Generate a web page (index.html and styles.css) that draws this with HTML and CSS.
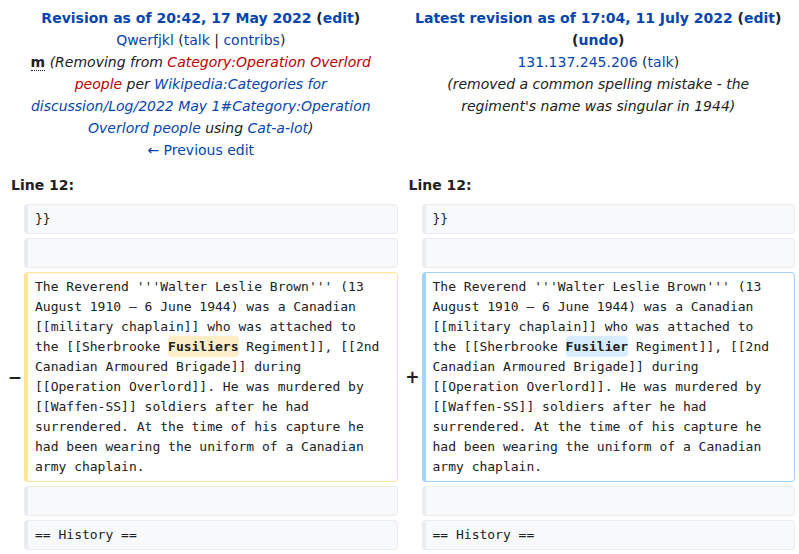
FILE: index.html
```html
<!DOCTYPE html>
<html lang="en">
<head>
<meta charset="utf-8">
<title>Diff</title>
<link rel="stylesheet" href="styles.css">
</head>
<body>
<table class="diff">
  <colgroup>
    <col class="col-marker"><col class="col-content"><col class="col-marker"><col class="col-content">
  </colgroup>
  <tr>
    <td colspan="2" class="diff-title">
      <div class="title-line"><strong><a class="link">Revision as of 20:42, 17 May 2022</a> (<a class="link">edit</a>)</strong></div>
      <div><a class="link">Qwerfjkl</a> (<a class="link">talk</a> | <a class="link">contribs</a>)</div>
      <div><abbr class="minor">m</abbr> <span class="comment">(Removing from <a class="new">Category:Operation Overlord people</a> per <a class="link">Wikipedia:Categories for discussion/Log/2022 May 1#Category:Operation Overlord people</a> using <a class="link">Cat-a-lot</a>)</span></div>
      <div><a class="link">← Previous edit</a></div>
    </td>
    <td colspan="2" class="diff-title">
      <div class="title-line"><strong><a class="link">Latest revision as of 17:04, 11 July 2022</a> (<a class="link">edit</a>) (<a class="link">undo</a>)</strong></div>
      <div><a class="link">131.137.245.206</a> (<a class="link">talk</a>)</div>
      <div><span class="comment">(removed a common spelling mistake - the regiment's name was singular in 1944)</span></div>
    </td>
  </tr>
  <tr>
    <td colspan="2" class="diff-lineno">Line 12:</td>
    <td colspan="2" class="diff-lineno">Line 12:</td>
  </tr>
  <tr>
    <td class="diff-marker"></td>
    <td class="diff-context">}}</td>
    <td class="diff-marker"></td>
    <td class="diff-context">}}</td>
  </tr>
  <tr>
    <td class="diff-marker"></td>
    <td class="diff-context"><br></td>
    <td class="diff-marker"></td>
    <td class="diff-context"><br></td>
  </tr>
  <tr>
    <td class="diff-marker"><span class="sign">−</span></td>
    <td class="diff-deletedline">The Reverend '''Walter Leslie Brown''' (13 August 1910 – 6 June 1944) was a Canadian [[military chaplain]] who was attached to the [[Sherbrooke <del class="diffchange">Fusiliers</del> Regiment]], [[2nd Canadian Armoured Brigade]] during [[Operation Overlord]]. He was murdered by [[Waffen-SS]] soldiers after he had surrendered. At the time of his capture he had been wearing the uniform of a Canadian army chaplain.</td>
    <td class="diff-marker"><span class="sign">+</span></td>
    <td class="diff-addedline">The Reverend '''Walter Leslie Brown''' (13 August 1910 – 6 June 1944) was a Canadian [[military chaplain]] who was attached to the [[Sherbrooke <ins class="diffchange">Fusilier</ins> Regiment]], [[2nd Canadian Armoured Brigade]] during [[Operation Overlord]]. He was murdered by [[Waffen-SS]] soldiers after he had surrendered. At the time of his capture he had been wearing the uniform of a Canadian army chaplain.</td>
  </tr>
  <tr>
    <td class="diff-marker"></td>
    <td class="diff-context"><br></td>
    <td class="diff-marker"></td>
    <td class="diff-context"><br></td>
  </tr>
  <tr>
    <td class="diff-marker"></td>
    <td class="diff-context">== History ==</td>
    <td class="diff-marker"></td>
    <td class="diff-context">== History ==</td>
  </tr>
</table>
</body>
</html>
```
FILE: styles.css
```css
html, body {
  margin: 0;
  padding: 0;
  background: #ffffff;
}

body {
  font-family: "DejaVu Sans", sans-serif;
  font-size: 14px;
  color: #202122;
}

.diff {
  width: 100%;
  table-layout: fixed;
  border-collapse: separate;
  border-spacing: 4px;
}

.col-marker {
  width: 16px;
}

.diff-title {
  text-align: center;
  vertical-align: top;
  line-height: 22px;
  padding: 3px 8px 3px;
}

.link {
  color: #0645ad;
  text-decoration: none;
}

.new {
  color: #ba0000;
  text-decoration: none;
}

.title-line strong {
  font-weight: bold;
}

.minor {
  font-weight: bold;
  text-decoration: none;
  border-bottom: 1px dotted #202122;
}

.comment {
  font-style: italic;
}

.diff-lineno {
  font-weight: bold;
  line-height: 22px;
  padding: 6px 7px 4px;
}

.diff-marker {
  text-align: right;
  vertical-align: middle;
  font-weight: bold;
  font-size: 17px;
  line-height: 20px;
  padding: 0;
  color: #202122;
}

.sign {
  margin-right: -2px;
}

.diff-context,
.diff-deletedline,
.diff-addedline {
  font-family: "DejaVu Sans Mono", monospace;
  font-size: 13px;
  line-height: 20px;
  vertical-align: top;
  white-space: pre-wrap;
  word-wrap: break-word;
  border-style: solid;
  border-width: 1px 1px 1px 4px;
  border-radius: 4px;
  padding: 4px 14px 4px 7px;
  color: #202122;
}

.diff-context {
  background: #f8f9fa;
  border-color: #eaecf0;
}

.diff-deletedline {
  background: #ffffff;
  border-color: #ffe49c;
}

.diff-addedline {
  background: #ffffff;
  border-color: #a3d3ff;
}

.diffchange {
  font-weight: bold;
  text-decoration: none;
  border-radius: 4px;
  padding: 3px 0;
}

.diff-deletedline .diffchange {
  background: #feeec8;
}

.diff-addedline .diffchange {
  background: #d8ecff;
}
```
